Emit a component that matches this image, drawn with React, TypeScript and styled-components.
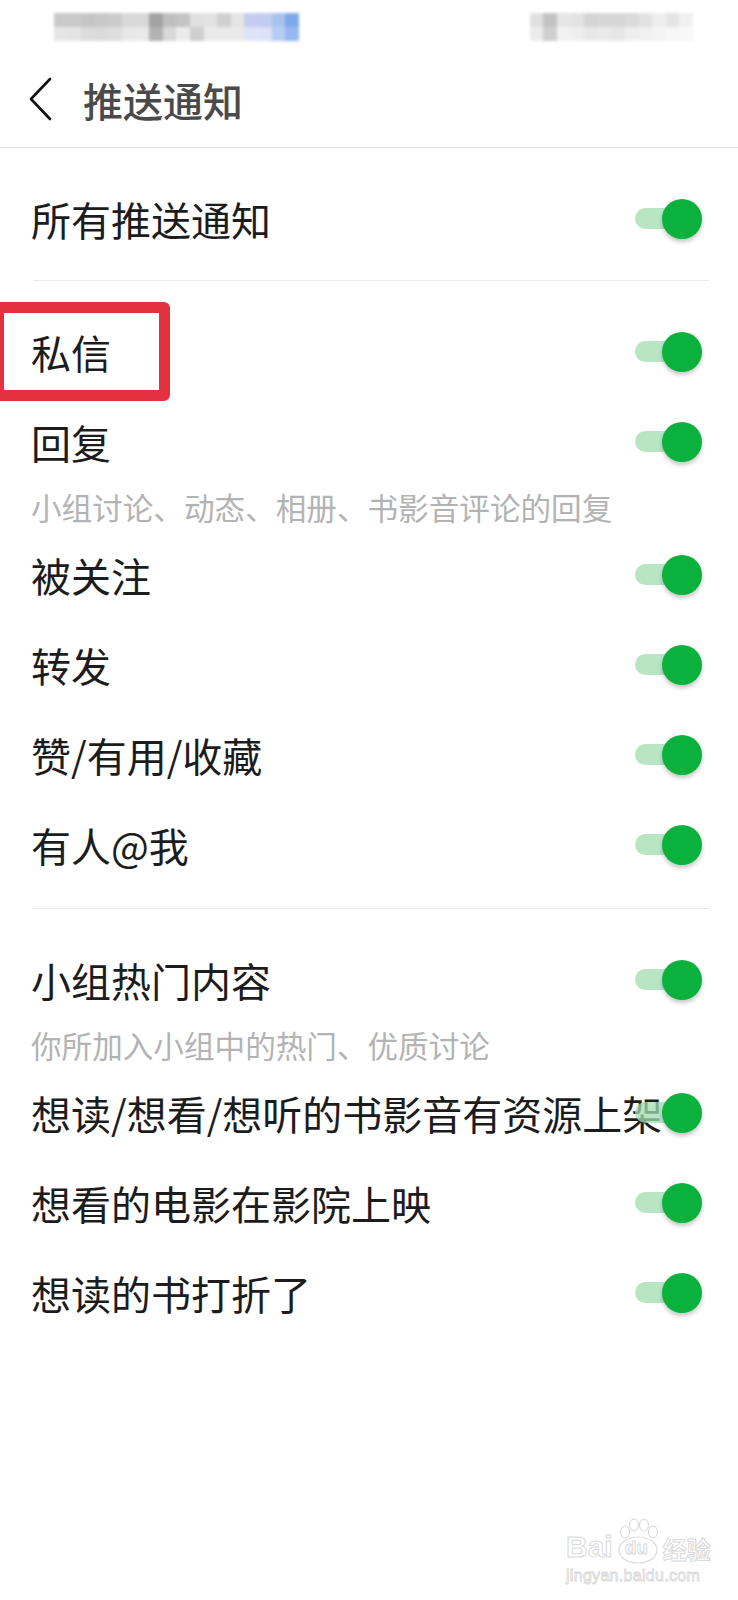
import styled, { createGlobalStyle } from "styled-components";

const GlobalStyle = createGlobalStyle`
  html, body {
    margin: 0;
    padding: 0;
    background: #ffffff;
  }
  body {
    font-family: "Noto Sans CJK SC", "Noto Sans", sans-serif;
  }
`;

// blurred status bar mosaic, two rows each
const leftMosaic = [
  ["#c9c9c9", "#c9c9c9", "#c5c5c5", "#c8c8c8", "#cbcbcb", "#d8d8d8", "#d9d9d9", "#a2a2a2", "#bfbfbf", "#c4c4c4", "#e0e0e0", "#e2e2e2", "#d0d0d0", "#e5e5e5", "#c6ccef", "#c2cbf0", "#a9c3f0", "#7ea9e8"],
  ["#e5e5e5", "#e4e4e4", "#dcdcdc", "#dadada", "#dedede", "#e8e8e8", "#e9e9e9", "#b2b2b2", "#d8d8d8", "#ececec", "#cfcfcf", "#eaeaea", "#ebebeb", "#eaeaea", "#dfe3f8", "#dce2f7", "#b5cdf2", "#96b8ee"],
];

const rightMosaic = [
  ["#e0e0e0", "#c3c3c3", "#e6e6e6", "#e2e2e2", "#d4d4d4", "#d6d6d6", "#d6d6d6", "#dadada", "#e2e2e2", "#eeeeee", "#e4e4e4", "#f0f0f0"],
  ["#ececec", "#cfcfcf", "#f2f2f2", "#eeeeee", "#e8e8e8", "#eaeaea", "#e6e6e6", "#eeeeee", "#f0f0f0", "#f4f4f4", "#f6f6f6", "#f8f8f8"],
];

type Item = { label: string; sub?: string };

const sections: { items: Item[]; bottom: number }[] = [
  { items: [{ label: "所有推送通知" }], bottom: 16 },
  {
    items: [
      { label: "私信" },
      { label: "回复", sub: "小组讨论、动态、相册、书影音评论的回复" },
      { label: "被关注" },
      { label: "转发" },
      { label: "赞/有用/收藏" },
      { label: "有人@我" },
    ],
    bottom: 18,
  },
  {
    items: [
      { label: "小组热门内容", sub: "你所加入小组中的热门、优质讨论" },
      { label: "想读/想看/想听的书影音有资源上架" },
      { label: "想看的电影在影院上映" },
      { label: "想读的书打折了" },
    ],
    bottom: 16,
  },
];

const Toggle = () => (
  <ToggleWrap>
    <Track />
    <Knob />
  </ToggleWrap>
);

const Mosaic = ({ rows }: { rows: string[][] }) => (
  <MosaicGrid $cols={rows[0].length}>
    {rows.flatMap((r, i) => r.map((c, j) => <Cell key={`${i}-${j}`} $c={c} />))}
  </MosaicGrid>
);

const App = () => {
  return (
    <>
      <GlobalStyle />
      <Page>
        <StatusBar>
          <Mosaic rows={leftMosaic} />
          <Mosaic rows={rightMosaic} />
        </StatusBar>

        <NavBar>
          <BackIcon viewBox="0 0 24 44" fill="none">
            <path d="M22 2 L3 22 L22 42" stroke="#111" strokeWidth="2.6" strokeLinecap="round" strokeLinejoin="round" />
          </BackIcon>
          <Title>推送通知</Title>
        </NavBar>

        {sections.map((sec, si) => (
          <div key={si}>
            <Section $bottom={sec.bottom}>
              {sec.items.map((it) => (
                <div key={it.label}>
                  <Row>
                    <Label>{it.label}</Label>
                    <Toggle />
                  </Row>
                  {it.sub && <Sub>{it.sub}</Sub>}
                </div>
              ))}
            </Section>
            {si < sections.length - 1 && <Divider />}
          </div>
        ))}

        <Highlight />

        <Watermark>
          <LogoLine>
            <LogoWord>Bai</LogoWord>
            <Paw>
              <svg width="50" height="46" viewBox="0 0 50 46" fill="#fff" stroke="#dcdcdc" strokeWidth="1.2">
                <ellipse cx="12" cy="14" rx="4.5" ry="6" />
                <ellipse cx="21" cy="7" rx="4.5" ry="6" />
                <ellipse cx="31" cy="7" rx="4.5" ry="6" />
                <ellipse cx="40" cy="14" rx="4.5" ry="6" />
                <ellipse cx="25" cy="32" rx="19" ry="13" />
              </svg>
              <PawText>du</PawText>
            </Paw>
            <LogoCn>经验</LogoCn>
          </LogoLine>
          <LogoUrl>jingyan.baidu.com</LogoUrl>
        </Watermark>
      </Page>
    </>
  );
};
export default App;

const Page = styled.div`
  position: relative;
  width: 738px;
  min-height: 1600px;
  overflow: hidden;
  background: #ffffff;
`;

const StatusBar = styled.div`
  height: 55px;
  box-sizing: border-box;
  padding: 13px 45px 0 54px;
  display: flex;
  justify-content: space-between;
  align-items: flex-start;
`;

const MosaicGrid = styled.div<{ $cols: number }>`
  display: grid;
  grid-template-columns: repeat(${(p) => p.$cols}, 13.6px);
  grid-auto-rows: 14px;
  filter: blur(1.4px);
`;

const Cell = styled.div<{ $c: string }>`
  background: ${(p) => p.$c};
`;

const NavBar = styled.div`
  height: 93px;
  box-sizing: border-box;
  display: flex;
  align-items: center;
  padding-left: 28px;
  border-bottom: 1px solid #dcdcdc;
`;

const BackIcon = styled.svg`
  width: 24px;
  height: 44px;
  margin-top: -4px;
`;

const Title = styled.div`
  margin-left: 31px;
  font-size: 40px;
  font-weight: 500;
  color: #4a4a4a;
  line-height: 1;
  margin-top: -2px;
`;

const Section = styled.div<{ $bottom: number }>`
  padding: 26px 0 ${(p) => p.$bottom}px;
`;

const Row = styled.div`
  height: 90px;
  display: flex;
  align-items: center;
  padding: 0 36px 0 31px;
`;

const Label = styled.div`
  flex: 1;
  min-width: 0;
  white-space: nowrap;
  font-size: 40px;
  line-height: 1;
  color: #1c1c1c;
`;

const Sub = styled.div`
  height: 45px;
  display: flex;
  align-items: center;
  padding-left: 31px;
  font-size: 30.6px;
  line-height: 1;
  color: #b3b3b3;
  margin-top: -2px;
`;

const Divider = styled.div`
  height: 1px;
  background: #e9e9e9;
  margin: 0 29px 0 33px;
`;

const ToggleWrap = styled.div`
  position: relative;
  flex-shrink: 0;
  width: 67px;
  height: 40px;
`;

const Track = styled.div`
  position: absolute;
  left: 0;
  top: 9px;
  width: 56px;
  height: 21px;
  border-radius: 11px;
  background: rgba(160, 222, 178, 0.75);
`;

const Knob = styled.div`
  position: absolute;
  right: 0;
  top: 0;
  width: 40px;
  height: 40px;
  border-radius: 50%;
  background: #0ab23d;
  box-shadow: 0 3px 4px rgba(0, 0, 0, 0.22);
`;

const Highlight = styled.div`
  position: absolute;
  left: -7px;
  top: 302px;
  width: 177px;
  height: 99px;
  box-sizing: border-box;
  border: 11px solid #e2323f;
  border-radius: 6px;
  pointer-events: none;
`;

const Watermark = styled.div`
  position: absolute;
  left: 566px;
  top: 1518px;
  display: flex;
  flex-direction: column;
  align-items: flex-start;
  pointer-events: none;
`;

const LogoLine = styled.div`
  display: flex;
  align-items: flex-end;
`;

const LogoWord = styled.span`
  font-family: "Liberation Sans", Arial, sans-serif;
  font-size: 30px;
  font-weight: 700;
  line-height: 1;
  color: #ffffff;
  -webkit-text-stroke: 1px #dadada;
  margin-bottom: 2px;
`;

const Paw = styled.span`
  position: relative;
  width: 50px;
  height: 46px;
  display: inline-block;
`;

const PawText = styled.span`
  position: absolute;
  left: 12px;
  top: 20px;
  font-family: "Liberation Sans", Arial, sans-serif;
  font-size: 19px;
  font-weight: 700;
  line-height: 1;
  color: #ffffff;
  -webkit-text-stroke: 1px #dadada;
`;

const LogoCn = styled.span`
  font-family: "Noto Sans CJK SC", sans-serif;
  font-size: 24px;
  font-weight: 700;
  line-height: 1;
  color: #ffffff;
  -webkit-text-stroke: 1px #dadada;
  margin-bottom: 3px;
`;

const LogoUrl = styled.span`
  font-family: "Liberation Sans", Arial, sans-serif;
  font-size: 16px;
  line-height: 1;
  margin-top: 4px;
  letter-spacing: 0.3px;
  color: #ffffff;
  -webkit-text-stroke: 0.8px #d6d6d6;
`;
